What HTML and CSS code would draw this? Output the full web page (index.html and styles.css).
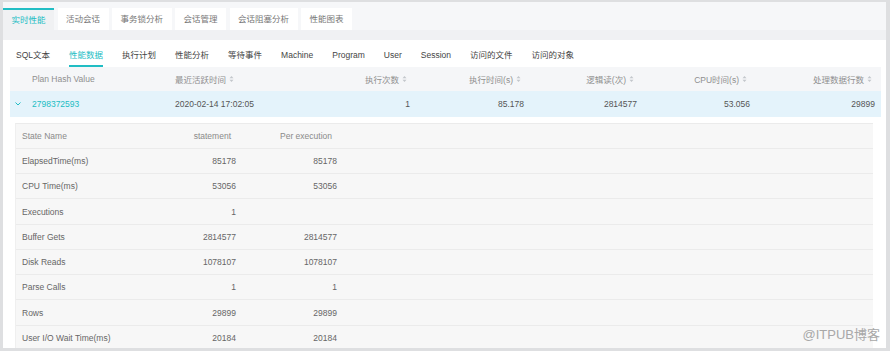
FILE: index.html
```html
<!DOCTYPE html>
<html lang="zh">

<head>
    <meta charset="UTF-8">
    <meta name="viewport" content="width=device-width, initial-scale=1.0">
    <title>实时性能</title>
    <link rel="stylesheet" href="styles.css">
</head>

<body>
    <div class="page">
        <div class="tabbar">
            <div class="tab active">实时性能</div>
            <div class="tab">活动会话</div>
            <div class="tab">事务锁分析</div>
            <div class="tab">会话管理</div>
            <div class="tab">会话阻塞分析</div>
            <div class="tab">性能图表</div>
        </div>
        <div class="strip"></div>

        <div class="content">
            <div class="subtabs">
                <span class="subtab">SQL文本</span>
                <span class="subtab on">性能数据</span>
                <span class="subtab">执行计划</span>
                <span class="subtab">性能分析</span>
                <span class="subtab">等待事件</span>
                <span class="subtab">Machine</span>
                <span class="subtab">Program</span>
                <span class="subtab">User</span>
                <span class="subtab">Session</span>
                <span class="subtab">访问的文件</span>
                <span class="subtab">访问的对象</span>
            </div>

            <div class="grid">
                <div class="row head">
                    <div class="cell"></div>
                    <div class="cell">Plan Hash Value</div>
                    <div class="cell">最近活跃时间<svg class="sort" width="5" height="8" viewBox="0 0 5 8"><path d="M0.5 3.3 L2.5 1 L4.5 3.3Z M0.5 4.7 L2.5 7 L4.5 4.7Z"/></svg></div>
                    <div class="cell num">执行次数<svg class="sort" width="5" height="8" viewBox="0 0 5 8"><path d="M0.5 3.3 L2.5 1 L4.5 3.3Z M0.5 4.7 L2.5 7 L4.5 4.7Z"/></svg></div>
                    <div class="cell num">执行时间(s)<svg class="sort" width="5" height="8" viewBox="0 0 5 8"><path d="M0.5 3.3 L2.5 1 L4.5 3.3Z M0.5 4.7 L2.5 7 L4.5 4.7Z"/></svg></div>
                    <div class="cell num">逻辑读(次)<svg class="sort" width="5" height="8" viewBox="0 0 5 8"><path d="M0.5 3.3 L2.5 1 L4.5 3.3Z M0.5 4.7 L2.5 7 L4.5 4.7Z"/></svg></div>
                    <div class="cell num">CPU时间(s)<svg class="sort" width="5" height="8" viewBox="0 0 5 8"><path d="M0.5 3.3 L2.5 1 L4.5 3.3Z M0.5 4.7 L2.5 7 L4.5 4.7Z"/></svg></div>
                    <div class="cell num">处理数据行数<svg class="sort" width="5" height="8" viewBox="0 0 5 8"><path d="M0.5 3.3 L2.5 1 L4.5 3.3Z M0.5 4.7 L2.5 7 L4.5 4.7Z"/></svg></div>
                </div>

                <div class="row data">
                    <div class="cell"><svg class="chev" width="6" height="4" viewBox="0 0 6 4"><polyline points="0.5,0.5 3,3 5.5,0.5"/></svg></div>
                    <div class="cell link">2798372593</div>
                    <div class="cell">2020-02-14 17:02:05</div>
                    <div class="cell num">1</div>
                    <div class="cell num">85.178</div>
                    <div class="cell num">2814577</div>
                    <div class="cell num">53.056</div>
                    <div class="cell num">29899</div>
                </div>

                <div class="expand">
                    <div class="stats">
                        <div class="srow shead">
                            <div>State Name</div>
                            <div class="num">statement</div>
                            <div class="num">Per execution</div>
                            <div></div>
                        </div>
                        <div class="srow">
                            <div>ElapsedTime(ms)</div>
                            <div class="num">85178</div>
                            <div class="num">85178</div>
                            <div></div>
                        </div>
                        <div class="srow">
                            <div>CPU Time(ms)</div>
                            <div class="num">53056</div>
                            <div class="num">53056</div>
                            <div></div>
                        </div>
                        <div class="srow">
                            <div>Executions</div>
                            <div class="num">1</div>
                            <div class="num"></div>
                            <div></div>
                        </div>
                        <div class="srow">
                            <div>Buffer Gets</div>
                            <div class="num">2814577</div>
                            <div class="num">2814577</div>
                            <div></div>
                        </div>
                        <div class="srow">
                            <div>Disk Reads</div>
                            <div class="num">1078107</div>
                            <div class="num">1078107</div>
                            <div></div>
                        </div>
                        <div class="srow">
                            <div>Parse Calls</div>
                            <div class="num">1</div>
                            <div class="num">1</div>
                            <div></div>
                        </div>
                        <div class="srow">
                            <div>Rows</div>
                            <div class="num">29899</div>
                            <div class="num">29899</div>
                            <div></div>
                        </div>
                        <div class="srow">
                            <div>User I/O Wait Time(ms)</div>
                            <div class="num">20184</div>
                            <div class="num">20184</div>
                            <div></div>
                        </div>
                    </div>
                </div>
            </div>

            <div class="watermark">@ITPUB博客</div>
        </div>
    </div>
</body>

</html>
```

FILE: styles.css
```css
body {
    margin: 0;
    padding: 2px 4px 3px 3px;
    background-color: #dedfe1;
    font-family: "Liberation Sans", "Noto Sans CJK SC", sans-serif;
    font-size: 8.5px;
    color: #555;
}

.page {
    height: 346px;
    display: flex;
    flex-direction: column;
    overflow: hidden;
}

/* top tabs */
.tabbar {
    height: 28px;
    box-sizing: border-box;
    padding-top: 6px;
    background-color: #f6f7f9;
    display: flex;
    align-items: flex-end;
}

.tab {
    height: 22px;
    line-height: 22px;
    padding: 0 8.5px;
    margin-right: 3.5px;
    background-color: #fff;
    color: #777;
}

.tab.active {
    background-color: #f0f1f3;
    color: #21bdc4;
    border-top: 2px solid #21bdc4;
    height: 20px;
    line-height: 21px;
}

.strip {
    height: 10px;
    background-color: #f0f1f3;
}

/* content */
.content {
    flex: 1;
    background-color: #fff;
    position: relative;
    overflow: hidden;
}

.subtabs {
    display: flex;
    gap: 19px;
    padding: 6px 0 0 13px;
    height: 21px;
}

.subtab {
    line-height: 19px;
    color: #444;
}

.subtab.on {
    color: #21bdc4;
    border-bottom: 2px solid #21bdc4;
}

.grid {
    margin: 0 5px 0 7px;
}

.row {
    display: grid;
    grid-template-columns: 22px 143px 123px 118px 114px 113px 113px 125px;
    align-items: center;
}

.row.head {
    height: 24px;
    background-color: #f5f6f8;
    color: #8f8f8f;
}

.row.head .num {
    padding-right: 9px;
}

.row.data {
    height: 26px;
    background-color: #e4f3fb;
}

.cell {
    white-space: nowrap;
    display: flex;
    align-items: center;
}

.num {
    justify-content: flex-end;
    text-align: right;
    padding-right: 6px;
}

.sort {
    margin-left: 3px;
    fill: #c4c7cc;
}

.chev {
    margin-left: 5px;
    fill: none;
    stroke: #21bdc4;
    stroke-width: 1;
}

.link {
    color: #21bdc4;
}

/* expanded stats */
.expand {
    padding: 5.7px 8px 0 5px;
}

.stats {
    background-color: #f7f7f7;
    border-top: 1px solid #ebebeb;
    border-left: 1px solid #efefef;
}

.srow {
    display: grid;
    grid-template-columns: 124px 100px 101px 1fr;
    align-items: center;
    height: 25.25px;
    box-sizing: border-box;
    border-bottom: 1px solid #ebebeb;
    color: #666;
}

.srow > div:first-child {
    padding-left: 6px;
}

.srow .num {
    padding-right: 4px;
}

.shead {
    color: #8a8a8a;
}

.shead .num {
    padding-right: 9px;
}

.watermark {
    position: absolute;
    right: 6px;
    bottom: 5px;
    font-size: 13px;
    color: #a8a8a8;
}
```
